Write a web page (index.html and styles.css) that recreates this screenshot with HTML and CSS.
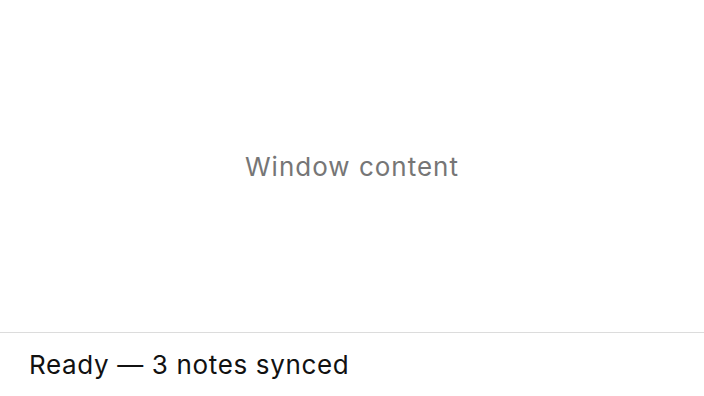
FILE: index.html
```html
<!DOCTYPE html>
<html>
<head>
<meta charset="utf-8">
<link rel="stylesheet" href="styles.css">
</head>
<body>
<div class="window">
  <main class="content">Window content</main>
  <footer class="status">Ready — 3 notes synced</footer>
</div>
</body>
</html>
```
FILE: styles.css
```css
html, body { margin: 0; padding: 0; background: #fff; }
body { font-family: Inter, "Noto Sans", sans-serif; }
.window { display: flex; flex-direction: column; height: 396px; width: 704px; }
.content { flex: 1; display: flex; align-items: center; justify-content: center; color: #767676; font-size: 26px; letter-spacing: 1px; }
.status { height: 63px; border-top: 1px solid #dcdcdc; display: flex; align-items: center; padding: 0 29px; color: #111; font-size: 26px; letter-spacing: 0.65px; }
```
